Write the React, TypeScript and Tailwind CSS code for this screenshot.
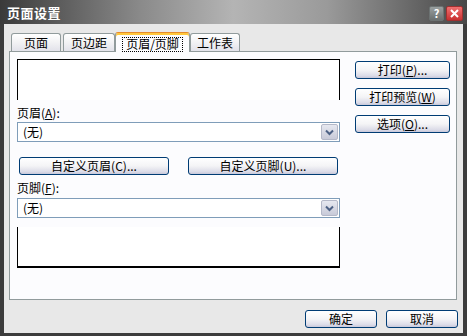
import React from "react";

const font = "font-['Noto_Sans_CJK_SC','Noto_Sans',sans-serif]";

function Btn({ children, className }: { children: React.ReactNode; className: string }) {
  return (
    <div
      className={
        "flex items-center justify-center h-[18px] rounded-[3px] border border-[#003c74] bg-[linear-gradient(to_bottom,#ffffff,#f4f4f6_50%,#dcdce8_85%,#c8c8da)] text-[12px] leading-none text-black " +
        className
      }
    >
      {children}
    </div>
  );
}

function Select() {
  return (
    <div className="flex items-center h-[20px] border border-[#7f9db9] bg-white">
      <div className="flex-1 pl-[5px] text-[12px] leading-none text-black">(无)</div>
      <div className="w-[17px] h-[16px] mr-[1px] flex items-center justify-center rounded-[2px] border border-[#b4b8c8] bg-[linear-gradient(to_bottom,#e6e8f0,#c8cad8)]">
        <svg width="9" height="7" viewBox="0 0 9 7">
          <path d="M1 1.5 L4.5 5 L8 1.5" stroke="#4d6185" strokeWidth="2" fill="none" />
        </svg>
      </div>
    </div>
  );
}

function Tab({ children, className }: { children: React.ReactNode; className: string }) {
  return (
    <div
      className={
        "flex items-center justify-center h-[18px] mt-[1px] rounded-t-[3px] border border-b-0 border-[#919b9c] bg-[linear-gradient(to_bottom,#ffffff,#f2f2f4_50%,#e2e2ea)] text-[12px] leading-none text-black " +
        className
      }
    >
      {children}
    </div>
  );
}

export default function App() {
  return (
    <div className={"w-[467px] h-[336px] flex flex-col bg-[#3c3c3c] overflow-hidden " + font}>
      {/* Title bar */}
      <div className="h-[24px] flex items-center justify-between pl-[7px] pr-[4px] bg-[linear-gradient(to_right,#3a3a3a,#8a8a8a_30%,#b4b4b4_50%,#9a9a9a_70%,#474747)]">
        <div className="text-white font-bold text-[13px] leading-none tracking-[0.5px]">页面设置</div>
        <div className="flex items-center gap-[2px] pt-[3px]">
          <div className="w-[15px] h-[15px] rounded-[2px] border border-[#6c7272] bg-[linear-gradient(to_bottom,#9aa0a0,#6a7070)] flex items-center justify-center text-white font-bold text-[11px] leading-none">
            ?
          </div>
          <div className="w-[17px] h-[15px] rounded-[2px] border border-[#a03030] bg-[linear-gradient(to_bottom,#f07070,#c83030)] flex items-center justify-center">
            <svg width="9" height="9" viewBox="0 0 9 9">
              <path d="M1 1 L8 8 M8 1 L1 8" stroke="white" strokeWidth="2" />
            </svg>
          </div>
        </div>
      </div>

      {/* Body */}
      <div className="flex-1 mx-[4px] mb-[3px] bg-[#e8e8e8] flex flex-col pt-[7px] px-[5px]">
        {/* Tabs */}
        <div className="flex items-end h-[20px] pl-[2px]">
          <Tab className="w-[50px]">页面</Tab>
          <Tab className="w-[52px] ml-[2px]">页边距</Tab>
          <div className="relative w-[75px] h-[20px] rounded-t-[3px] border border-b-0 border-[#919b9c] border-t-[#e68b2c] bg-[#fcfcfe] flex items-center justify-center z-10 mb-[-1px] shadow-[inset_0_2px_0_#ffc83c]">
            <div className="border border-dotted border-black px-[3px] h-[15px] mt-[3px] flex items-center text-[12px] leading-none text-black">
              页眉/页脚
            </div>
          </div>
          <Tab className="w-[50px]">工作表</Tab>
        </div>

        {/* Panel */}
        <div className="h-[249px] w-[448px] border border-[#919b9c] bg-[#fcfcfe] flex pt-[7px] pl-[7px]">
          {/* Left column */}
          <div className="w-[323px] flex flex-col">
            <div className="h-[41px] bg-white border-t border-x border-black" />
            <div className="mt-[5px] h-[16px] text-[12px] leading-[16px] text-black">
              页眉(<span className="underline">A</span>):
            </div>
            <div className="mt-[1px]">
              <Select />
            </div>
            <div className="mt-[15px] flex justify-between pl-[2px] pr-[2px]">
              <Btn className="w-[150px]">自定义页眉(C)...</Btn>
              <Btn className="w-[150px]">自定义页脚(U)...</Btn>
            </div>
            <div className="mt-[5px] h-[16px] text-[12px] leading-[16px] text-black">
              页脚(<span className="underline">F</span>):
            </div>
            <div className="mt-[2px]">
              <Select />
            </div>
            <div className="mt-[9px] h-[41px] bg-white border-x border-b-2 border-black" />
          </div>

          {/* Right column */}
          <div className="ml-[15px] w-[95px] flex flex-col gap-[9px] mt-[2px]">
            <Btn className="w-[95px]">
              打印(<span className="underline">P</span>)...
            </Btn>
            <Btn className="w-[95px]">
              打印预览(<span className="underline">W</span>)
            </Btn>
            <Btn className="w-[95px]">
              选项(<span className="underline">O</span>)...
            </Btn>
          </div>
        </div>

        {/* Bottom buttons */}
        <div className="mt-[10px] flex justify-end gap-[9px] pr-[0px]">
          <Btn className="w-[72px]">确定</Btn>
          <Btn className="w-[72px]">取消</Btn>
        </div>
      </div>
    </div>
  );
}
